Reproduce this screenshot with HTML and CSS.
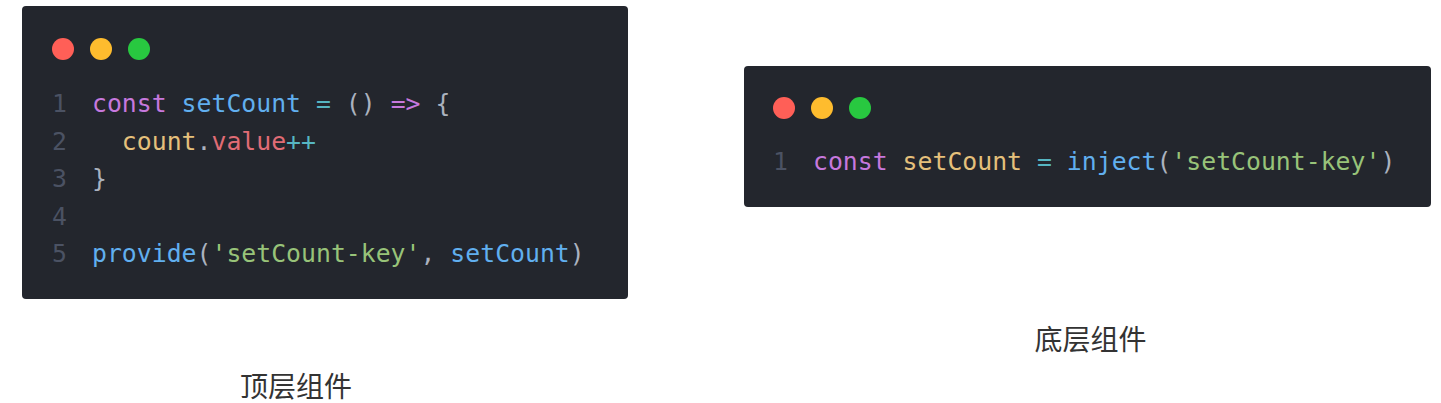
FILE: index.html
```html
<!DOCTYPE html>
<html lang="zh">
<head>
<meta charset="utf-8">
<link rel="stylesheet" href="styles.css">
</head>
<body>
<div class="page">
  <div class="col col-left">
    <div class="card">
      <div class="dots"><span class="dot red"></span><span class="dot yellow"></span><span class="dot green"></span></div>
      <div class="code">
        <div class="line"><span class="ln">1</span><span class="kw">const</span> <span class="fn">setCount</span> <span class="op">=</span> <span class="pn">()</span> <span class="kw">=&gt;</span> <span class="pn">{</span></div>
        <div class="line"><span class="ln">2</span>  <span class="var">count</span><span class="pn">.</span><span class="prop">value</span><span class="op">++</span></div>
        <div class="line"><span class="ln">3</span><span class="pn">}</span></div>
        <div class="line"><span class="ln">4</span></div>
        <div class="line"><span class="ln">5</span><span class="fn">provide</span><span class="pn">(</span><span class="str">'setCount-key'</span><span class="pn">,</span> <span class="fn">setCount</span><span class="pn">)</span></div>
      </div>
    </div>
    <div class="caption caption-left">顶层组件</div>
  </div>
  <div class="col col-right">
    <div class="card">
      <div class="dots"><span class="dot red"></span><span class="dot yellow"></span><span class="dot green"></span></div>
      <div class="code">
        <div class="line"><span class="ln">1</span><span class="kw">const</span> <span class="var">setCount</span> <span class="op">=</span> <span class="fn">inject</span><span class="pn">(</span><span class="str">'setCount-key'</span><span class="pn">)</span></div>
      </div>
    </div>
    <div class="caption caption-right">底层组件</div>
  </div>
</div>
</body>
</html>
```
FILE: styles.css
```css
html, body {
  margin: 0;
  padding: 0;
  background: #ffffff;
}
.page {
  display: flex;
  align-items: flex-start;
  width: 1441px;
  height: 403px;
}
.col {
  display: flex;
  flex-direction: column;
}
.col-left {
  margin-left: 22px;
  margin-top: 6px;
  width: 606px;
}
.col-right {
  margin-left: 116px;
  margin-top: 66px;
  width: 687px;
}
.card {
  background: #23262d;
  border-radius: 4px;
  padding: 32px 30px 26px 30px;
  box-sizing: border-box;
}
.col-right .card {
  padding: 31px 29px 26px 29px;
}
.dots {
  display: flex;
  gap: 16px;
  margin-bottom: 25px;
}
.col-right .dots {
  margin-bottom: 24px;
}
.dot {
  width: 22px;
  height: 22px;
  border-radius: 50%;
  display: block;
}
.red { background: #ff5f57; }
.yellow { background: #febc2e; }
.green { background: #28c840; }
.code {
  font-family: "DejaVu Sans Mono", monospace;
  font-size: 24.8px;
  line-height: 37.5px;
  color: #abb2bf;
}
.line {
  height: 37.5px;
  white-space: pre;
}
.ln {
  display: inline-block;
  width: 40px;
  color: #4b5263;
}
.kw { color: #c678dd; }
.fn { color: #61afef; }
.var { color: #e5c07b; }
.prop { color: #e06c75; }
.op { color: #56b6c2; }
.str { color: #98c379; }
.pn { color: #abb2bf; }
.caption {
  font-family: "Noto Sans CJK SC", sans-serif;
  font-size: 28px;
  line-height: 36px;
  color: #333333;
  text-align: center;
}
.caption-left {
  margin-top: 68px;
  margin-left: -58px;
}
.caption-right {
  margin-top: 113px;
  margin-left: 6px;
}
```
